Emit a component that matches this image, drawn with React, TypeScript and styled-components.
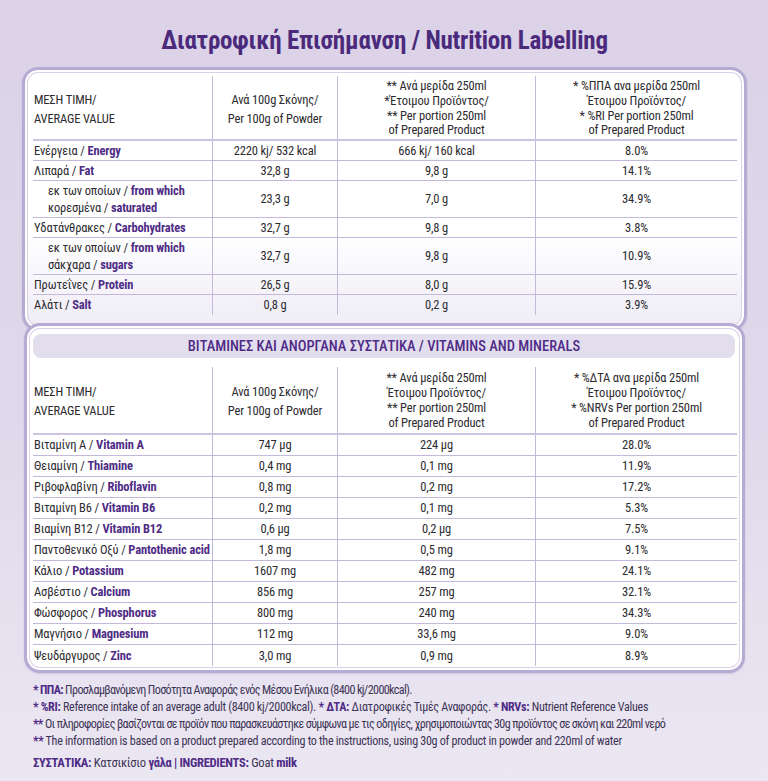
import React from "react";
import styled, { createGlobalStyle } from "styled-components";

const Global = createGlobalStyle`
  html, body { margin: 0; padding: 0; }
  body {
    font-family: "Roboto Condensed", Roboto, "Noto Sans", sans-serif;
    color: #2d2b30;
    background: #e6e0ee;
  }
`;

const PURPLE = "#4f2c86";
const LINE = "#c3b9da";

const Page = styled.div`
  width: 768px;
  height: 781px;
  box-sizing: border-box;
  padding: 24px 21px 0 22px;
  background: linear-gradient(180deg, #dbd2e8 0%, #e0d9eb 55%, #ebe7f2 100%);
  overflow: hidden;
`;

const Title = styled.h1`
  margin: 0 0 9px;
  font-size: 25px;
  line-height: 34px;
  font-weight: 700;
  color: #4b2a7b;
  text-align: center;
  letter-spacing: -0.2px;
`;

const Card = styled.section<{ $second?: boolean }>`
  position: relative;
  z-index: ${(p) => (p.$second ? 1 : 0)};
  margin: ${(p) => (p.$second ? "-8px 2px 0" : "0")};
  padding: ${(p) => (p.$second ? "8px 5px 4px 6px" : "6px 7px 13px 8px")};
  border: 3px solid #b6abd2;
  border-radius: 16px;
  background: ${(p) =>
    p.$second ? "#fff" : "linear-gradient(180deg, #fff 0%, #fff 62%, #efecf5 100%)"};
  box-shadow: inset 0 0 0 2px #fff, inset 0 0 0 3px #d9d2e8,
    0 1px 2px rgba(90, 70, 140, 0.18);
`;

const SectionBar = styled.div`
  height: 24px;
  margin-right: 2px;
  border-radius: 8px;
  background: #e3deee;
  display: flex;
  align-items: center;
  justify-content: center;
  color: ${PURPLE};
  font-size: 14.5px;
  font-weight: 500;
`;

const Row = styled.div<{ $h: number; $head?: boolean; $last?: boolean; $gapTop?: number }>`
  display: grid;
  grid-template-columns: 179px 125px 198px 1fr;
  height: ${(p) => p.$h}px;
  box-sizing: border-box;
  margin-top: ${(p) => p.$gapTop || 0}px;
  border-bottom: ${(p) => (p.$last ? "none" : p.$head ? `2px solid #cdc5e0` : `1px solid ${LINE}`)};
`;

const Cell = styled.div<{ $left?: boolean; $indent?: boolean; $tight?: boolean }>`
  display: flex;
  flex-direction: column;
  justify-content: center;
  align-items: ${(p) => (p.$left ? "flex-start" : "center")};
  text-align: ${(p) => (p.$left ? "left" : "center")};
  padding-left: ${(p) => (p.$indent ? 15 : p.$left ? 1 : 0)}px;
  border-left: ${(p) => (p.$left ? "none" : `1px solid ${LINE}`)};
  font-size: 12.5px;
  line-height: ${(p) => (p.$tight ? 14.6 : 17.5)}px;
  white-space: nowrap;
  letter-spacing: -0.15px;
`;

const HeadCell = styled(Cell)`
  font-size: 12.5px;
  line-height: ${(p) => (p.$tight ? "14.9px" : "19px")};
  padding-top: 2px;
`;

const Gr = styled.span`
  font-weight: 400;
  color: #2d2b30;
`;

const En = styled.span`
  font-weight: 700;
  color: ${PURPLE};
`;

const Notes = styled.div`
  margin-top: 9px;
  padding-left: 11px;
  font-size: 12.1px;
  line-height: 17px;
  color: #3e3456;
  white-space: nowrap;
`;

const NoteLine = styled.div<{ $greek?: boolean; $space?: boolean; $big?: boolean }>`
  margin-top: ${(p) => (p.$space ? 4 : 0)}px;
  letter-spacing: ${(p) => (p.$greek ? -0.62 : -0.3)}px;
  font-size: ${(p) => (p.$big ? 12.6 : 12.1)}px;
`;

const B = styled.b`
  font-weight: 700;
  color: ${PURPLE};
`;

type Item = { gr: string; en: string; gr2?: string; en2?: string; a: string; b: string; c: string };

const nutrition: Item[] = [
  { gr: "Ενέργεια / ", en: "Energy", a: "2220 kj/ 532 kcal", b: "666 kj/ 160 kcal", c: "8.0%" },
  { gr: "Λιπαρά / ", en: "Fat", a: "32,8 g", b: "9,8 g", c: "14.1%" },
  { gr: "εκ των οποίων / ", en: "from which", gr2: "κορεσμένα / ", en2: "saturated", a: "23,3 g", b: "7,0 g", c: "34.9%" },
  { gr: "Υδατάνθρακες / ", en: "Carbohydrates", a: "32,7 g", b: "9,8 g", c: "3.8%" },
  { gr: "εκ των οποίων / ", en: "from which", gr2: "σάκχαρα / ", en2: "sugars", a: "32,7 g", b: "9,8 g", c: "10.9%" },
  { gr: "Πρωτεΐνες / ", en: "Protein", a: "26,5 g", b: "8,0 g", c: "15.9%" },
  { gr: "Αλάτι / ", en: "Salt", a: "0,8 g", b: "0,2 g", c: "3.9%" },
];

const vitamins: Item[] = [
  { gr: "Βιταμίνη A / ", en: "Vitamin A", a: "747 μg", b: "224 μg", c: "28.0%" },
  { gr: "Θειαμίνη / ", en: "Thiamine", a: "0,4 mg", b: "0,1 mg", c: "11.9%" },
  { gr: "Ριβοφλαβίνη / ", en: "Riboflavin", a: "0,8 mg", b: "0,2 mg", c: "17.2%" },
  { gr: "Βιταμίνη B6 / ", en: "Vitamin B6", a: "0,2 mg", b: "0,1 mg", c: "5.3%" },
  { gr: "Βιαμίνη B12 / ", en: "Vitamin B12", a: "0,6 μg", b: "0,2 μg", c: "7.5%" },
  { gr: "Παντοθενικό Οξύ / ", en: "Pantothenic acid", a: "1,8 mg", b: "0,5 mg", c: "9.1%" },
  { gr: "Κάλιο / ", en: "Potassium", a: "1607 mg", b: "482 mg", c: "24.1%" },
  { gr: "Ασβέστιο / ", en: "Calcium", a: "856 mg", b: "257 mg", c: "32.1%" },
  { gr: "Φώσφορος / ", en: "Phosphorus", a: "800 mg", b: "240 mg", c: "34.3%" },
  { gr: "Μαγνήσιο / ", en: "Magnesium", a: "112 mg", b: "33,6 mg", c: "9.0%" },
  { gr: "Ψευδάργυρος / ", en: "Zinc", a: "3,0 mg", b: "0,9 mg", c: "8.9%" },
];

function Header({ h, gapTop, c3, c4 }: { h: number; gapTop?: number; c3: string[]; c4: string[] }) {
  return (
    <Row $h={h} $head $gapTop={gapTop}>
      <HeadCell $left>
        <div>ΜΕΣΗ ΤΙΜΗ/</div>
        <div>AVERAGE VALUE</div>
      </HeadCell>
      <HeadCell>
        <div>Ανά 100g Σκόνης/</div>
        <div>Per 100g of Powder</div>
      </HeadCell>
      <HeadCell $tight>
        {c3.map((t) => (
          <div key={t}>{t}</div>
        ))}
      </HeadCell>
      <HeadCell $tight>
        {c4.map((t) => (
          <div key={t}>{t}</div>
        ))}
      </HeadCell>
    </Row>
  );
}

function DataRows({ items, single }: { items: Item[]; single: number }) {
  return (
    <>
      {items.map((it, i) => {
        const dbl = !!it.gr2;
        return (
          <Row key={it.en + i} $h={dbl ? 37 : single} $last={i === items.length - 1}>
            <Cell $left $indent={dbl}>
              <div>
                <Gr>{it.gr}</Gr>
                <En>{it.en}</En>
              </div>
              {dbl && (
                <div>
                  <Gr>{it.gr2}</Gr>
                  <En>{it.en2}</En>
                </div>
              )}
            </Cell>
            <Cell>{it.a}</Cell>
            <Cell>{it.b}</Cell>
            <Cell>{it.c}</Cell>
          </Row>
        );
      })}
    </>
  );
}

export default function App() {
  return (
    <Page>
      <Global />
      <Title>Διατροφική Επισήμανση / Nutrition Labelling</Title>

      <Card>
        <Header
          h={65}
          c3={["** Ανά μερίδα 250ml", "*Έτοιμου Προϊόντος/", "** Per portion 250ml", "of Prepared Product"]}
          c4={["* %ΠΠΑ ανα μερίδα 250ml", "Έτοιμου Προϊόντος/", "* %RI Per portion 250ml", "of Prepared Product"]}
        />
        <DataRows items={nutrition} single={20} />
      </Card>

      <Card $second>
        <SectionBar>ΒΙΤΑΜΙΝΕΣ ΚΑΙ ΑΝΟΡΓΑΝΑ ΣΥΣΤΑΤΙΚΑ / VITAMINS AND MINERALS</SectionBar>
        <Header
          h={68}
          gapTop={9}
          c3={["** Ανά μερίδα 250ml", "Έτοιμου Προϊόντος/", "** Per portion 250ml", "of Prepared Product"]}
          c4={["* %ΔΤΑ ανα μερίδα 250ml", "Έτοιμου Προϊόντος/", "* %NRVs Per portion 250ml", "of Prepared Product"]}
        />
        <DataRows items={vitamins} single={21} />
      </Card>

      <Notes>
        <NoteLine $greek>
          <B>* ΠΠΑ:</B> Προσλαμβανόμενη Ποσότητα Αναφοράς ενός Μέσου Ενήλικα (8400 kj/2000kcal).
        </NoteLine>
        <NoteLine>
          <B>* %RI:</B> Reference intake of an average adult (8400 kj/2000kcal). <B>* ΔΤΑ:</B> Διατροφικές Τιμές Αναφοράς.{" "}
          <B>* NRVs:</B> Nutrient Reference Values
        </NoteLine>
        <NoteLine $greek>
          <B>**</B> Οι πληροφορίες βασίζονται σε προϊόν που παρασκευάστηκε σύμφωνα με τις οδηγίες, χρησιμοποιώντας 30g προϊόντος σε σκόνη και 220ml νερό
        </NoteLine>
        <NoteLine>
          <B>**</B> The information is based on a product prepared according to the instructions, using 30g of product in powder and 220ml of water
        </NoteLine>
        <NoteLine $space $big>
          <B>ΣΥΣΤΑΤΙΚΑ:</B> Κατσικίσιο <B>γάλα</B> <B>| INGREDIENTS:</B> Goat <B>milk</B>
        </NoteLine>
      </Notes>
    </Page>
  );
}
